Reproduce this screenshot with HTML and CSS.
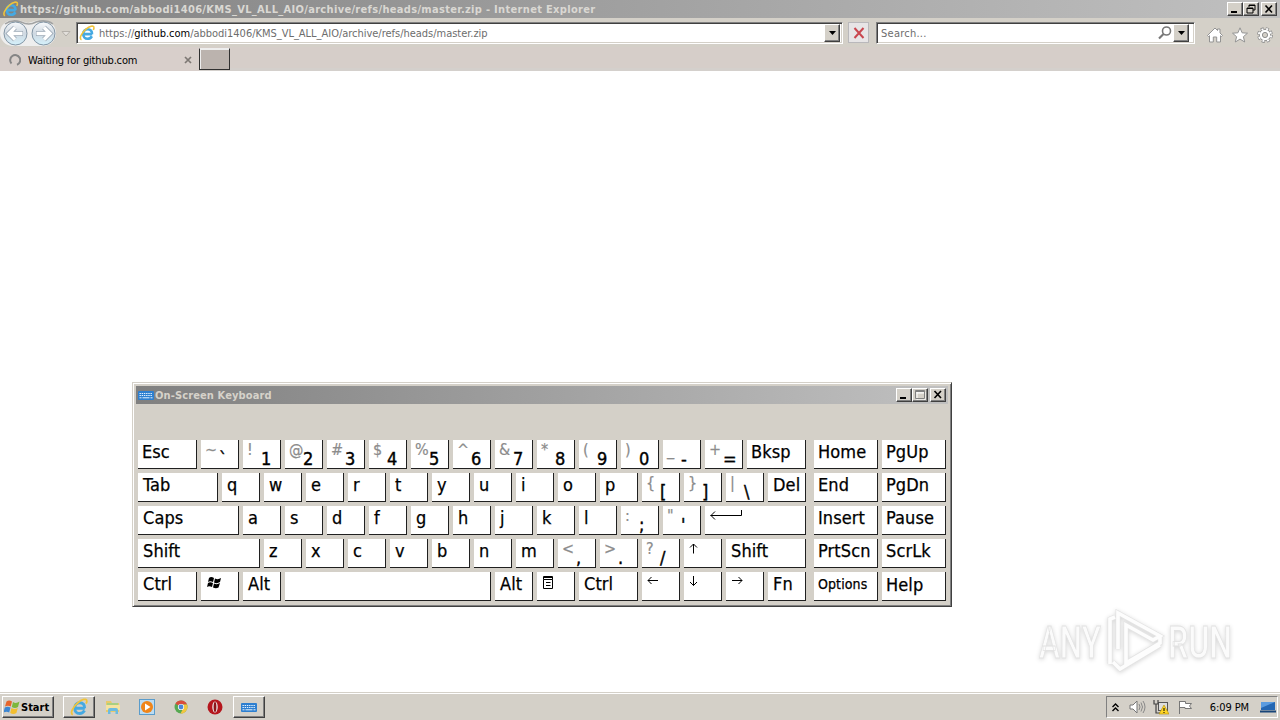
FILE: index.html
```html
<!DOCTYPE html>
<html lang="en">
<head>
    <meta charset="UTF-8">
    <title>Internet Explorer</title>
    <link rel="stylesheet" href="styles.css">
</head>
<body>
    <svg width="0" height="0" class="defs">
        <defs>
            <symbol id="ie" viewBox="0 0 16 16">
                <path d="M13.2 9.1H5.5M12.9 11.2C11.8 13 10.5 13.8 8.6 13.8C5.8 13.8 4.2 11.7 4.2 9C4.2 6.2 6 4.2 8.7 4.2C11.6 4.2 13.2 6.2 13 9.1" fill="none" stroke="#45a9e2" stroke-width="2.6"/>
                <path d="M2.5 14.8C-.5 13.5 3 7.5 7 4.2C10.5 1.2 14.5.2 14.9 2.2C15.1 3 14.8 4 14.3 5" fill="none" stroke="#f0c33a" stroke-width="1.6"/>
            </symbol>
            <symbol id="kbd" viewBox="0 0 16 9">
                <rect width="16" height="9" rx="1" fill="#2d7fd0"/>
                <path d="M1.5 2.5H14.5M1.5 4.5H14.5" stroke="#e4f2ff" stroke-dasharray="1.4 .8"/>
                <path d="M1.5 6.8H3.5M4.5 6.8H11.5M12.5 6.8H14.5" stroke="#e4f2ff"/>
            </symbol>
        </defs>
    </svg>

    <div class="titlebar">
        <svg class="title-ie" width="17" height="16"><use href="#ie"/></svg>
        <span class="title-text">https://github.com/abbodi1406/KMS_VL_ALL_AIO/archive/refs/heads/master.zip - Internet Explorer</span>
        <div class="win-buttons">
            <span class="wbtn"><svg width="12" height="10"><path d="M2 8H8" stroke="#000" stroke-width="2"/></svg></span>
            <span class="wbtn"><svg width="12" height="10"><path d="M4 1H10V6H8M4 1V3M4 1.5H10M2 4H8V9H2ZM2 4.5H8" fill="none" stroke="#000"/></svg></span>
            <span class="wbtn close"><svg width="12" height="10"><path d="M2.5 1.5L9 8.5M9 1.5L2.5 8.5" stroke="#000" stroke-width="1.6"/></svg></span>
        </div>
    </div>

    <div class="navbar">
        <svg class="nav-arrows" width="74" height="29">
            <defs>
                <linearGradient id="ball" x1="0" y1="0" x2="0" y2="1">
                    <stop offset="0" stop-color="#f8fafc"/><stop offset=".5" stop-color="#cfd8e1"/><stop offset="1" stop-color="#d5f1fb"/>
                </linearGradient>
            </defs>
            <path d="M13 2Q20 2 28 5Q36 2 43 2A13 13 0 0 1 43 28H13A13 13 0 0 1 13 2Z" fill="#eeeeee"/>
            <path d="M5 6Q12 1 21 4Q29 8 36 4Q46 1 53 6" fill="none" stroke="#a2a3a3" stroke-width="1.500"/>
            <circle cx="15.500" cy="15.500" r="11.500" fill="url(#ball)" stroke="#8295a5"/>
            <circle cx="43.500" cy="15.500" r="11.500" fill="url(#ball)" stroke="#8295a5"/>
            <path d="M23 15.500H10M15 9.500L9 15.500L15 21.500" fill="none" stroke="#9aa7b4" stroke-width="5"/>
            <path d="M22.500 15.500H10M15 9.500L9 15.500L15 21.500" fill="none" stroke="#fff" stroke-width="3.400"/>
            <path d="M36 15.500H49M44 9.500L50 15.500L44 21.500" fill="none" stroke="#9aa7b4" stroke-width="5"/>
            <path d="M36.500 15.500H49M44 9.500L50 15.500L44 21.500" fill="none" stroke="#fff" stroke-width="3.400"/>
            <path d="M62 13.500H70L66 18Z" fill="#e3e0dc" stroke="#b4b0aa"/>
        </svg>
        <div class="address">
            <svg width="16" height="16"><use href="#ie"/></svg>
            <span class="url">https://<b>github.com</b>/abbodi1406/KMS_VL_ALL_AIO/archive/refs/heads/master.zip</span>
            <span class="drop"><svg width="7" height="4"><path d="M0 0H7L3.500 4Z"/></svg></span>
        </div>
        <div class="stop"><svg width="12" height="12"><path d="M1.500 1L10.500 11M10.500 1L1.500 11" stroke="#c9474f" stroke-width="2"/></svg></div>
        <div class="search">
            <span>Search...</span>
            <svg class="glass" width="14" height="14"><circle cx="8.500" cy="5" r="4" fill="none" stroke="#777" stroke-width="1.600"/><path d="M5.500 8L1 12.500" stroke="#777" stroke-width="2.200"/></svg>
            <span class="drop"><svg width="7" height="4"><path d="M0 0H7L3.500 4Z"/></svg></span>
        </div>
        <div class="tools">
            <svg width="16" height="16"><path d="M8 1L10.500 3.500V2H13V6L15.500 8.500L14.500 9.500L13.500 8.700V15H9.700V10H6.300V15H2.500V8.700L1.500 9.500L.5 8.500Z" fill="#fff" stroke="#939393"/></svg>
            <svg width="16" height="16"><path d="M8 .8L10.100 5.800L15.500 6.200L11.400 9.700L12.700 15L8 12.100L3.300 15L4.600 9.700L.5 6.200L5.900 5.800Z" fill="#fff" stroke="#939393"/></svg>
            <svg width="16" height="16"><circle cx="8" cy="8" r="6.200" fill="none" stroke="#8e8e8e" stroke-width="3.400" stroke-dasharray="2.900 1.970"/><circle cx="8" cy="8" r="5.700" fill="#fff" stroke="#8e8e8e"/><circle cx="8" cy="8" r="6.200" fill="none" stroke="#fff" stroke-width="1.800" stroke-dasharray="1.900 2.970" stroke-dashoffset="-.5"/><circle cx="8" cy="8" r="2.600" fill="#d4d0c8" stroke="#8e8e8e"/></svg>
        </div>
    </div>

    <div class="tabs">
        <div class="tab">
            <svg width="12" height="12"><path d="M2.500 9.500A5 5 0 1 1 8 10.800" fill="none" stroke="#858585" stroke-width="2"/></svg>
            <span>Waiting for github.com</span>
            <svg class="tab-x" width="8" height="8"><path d="M1 1L7 7M7 1L1 7" stroke="#7d7874" stroke-width="1.700"/></svg>
        </div>
        <div class="new-tab"></div>
    </div>

    <div class="page">
        <svg class="watermark" width="220" height="74">
            <g class="mark-text">
                <text x="7" y="49" textLength="62" lengthAdjust="spacingAndGlyphs">ANY</text>
                <text x="136" y="49" textLength="64" lengthAdjust="spacingAndGlyphs">RUN</text>
            </g>
            <path class="mark-edge" d="M78 55V10L83 8M86 40V4L128 27L121 31L94 16V54L128 34V28M81 53L88 60L128 36"/>
            <path class="mark-line" d="M78 55V10L83 8M86 40V4L128 27L121 31L94 16V54L128 34V28M81 53L88 60L128 36"/>
        </svg>
    </div>

    <div class="osk">
        <div class="osk-title">
            <svg width="16" height="9"><use href="#kbd"/></svg>
            <span>On-Screen Keyboard</span>
            <div class="win-buttons">
                <span class="wbtn"><svg width="12" height="10"><path d="M2 8H8" stroke="#000" stroke-width="2"/></svg></span>
                <span class="wbtn"><svg width="12" height="10"><path d="M2 1.500H10.500V9.500H2.500V1M2 2.500H10" fill="none" stroke="#fff" transform="translate(.5 .5)"/><path d="M1.500 .5H10.500V8.500H1.500ZM2 1.500H10" fill="none" stroke="#808080"/></svg></span>
                <span class="wbtn close"><svg width="12" height="10"><path d="M2.500 1L9 8M9 1L2.500 8" stroke="#000" stroke-width="1.600"/></svg></span>
            </div>
        </div>
        <div class="keys">
            <div class="row">
                <div class="key w59">Esc</div>
                <div class="key"><i>~</i><b>`</b></div>
                <div class="key"><i>!</i><b>1</b></div>
                <div class="key"><i>@</i><b>2</b></div>
                <div class="key"><i>#</i><b>3</b></div>
                <div class="key"><i>$</i><b>4</b></div>
                <div class="key"><i>%</i><b>5</b></div>
                <div class="key"><i>^</i><b>6</b></div>
                <div class="key"><i>&amp;</i><b>7</b></div>
                <div class="key"><i>*</i><b>8</b></div>
                <div class="key"><i>(</i><b>9</b></div>
                <div class="key"><i>)</i><b>0</b></div>
                <div class="key"><i>_</i><b>-</b></div>
                <div class="key"><i>+</i><b>=</b></div>
                <div class="key w59">Bksp</div>
                <div class="key side first">Home</div>
                <div class="key side">PgUp</div>
            </div>
            <div class="row">
                <div class="key w80">Tab</div>
                <div class="key">q</div>
                <div class="key">w</div>
                <div class="key">e</div>
                <div class="key">r</div>
                <div class="key">t</div>
                <div class="key">y</div>
                <div class="key">u</div>
                <div class="key">i</div>
                <div class="key">o</div>
                <div class="key">p</div>
                <div class="key"><i>{</i><b>[</b></div>
                <div class="key"><i>}</i><b>]</b></div>
                <div class="key"><i>|</i><b>\</b></div>
                <div class="key">Del</div>
                <div class="key side first">End</div>
                <div class="key side">PgDn</div>
            </div>
            <div class="row">
                <div class="key w101">Caps</div>
                <div class="key">a</div>
                <div class="key">s</div>
                <div class="key">d</div>
                <div class="key">f</div>
                <div class="key">g</div>
                <div class="key">h</div>
                <div class="key">j</div>
                <div class="key">k</div>
                <div class="key">l</div>
                <div class="key"><i>:</i><b>;</b></div>
                <div class="key"><i>"</i><b>'</b></div>
                <div class="key w101"><svg width="40" height="18"><path d="M1.500 9.500H32.500V4M6 5.500L2 9.500L6 13.500" fill="none" stroke="#000"/></svg></div>
                <div class="key side first">Insert</div>
                <div class="key side">Pause</div>
            </div>
            <div class="row">
                <div class="key w122">Shift</div>
                <div class="key">z</div>
                <div class="key">x</div>
                <div class="key">c</div>
                <div class="key">v</div>
                <div class="key">b</div>
                <div class="key">n</div>
                <div class="key">m</div>
                <div class="key"><i>&lt;</i><b>,</b></div>
                <div class="key"><i>&gt;</i><b>.</b></div>
                <div class="key"><i>?</i><b>/</b></div>
                <div class="key"><svg width="16" height="18"><path d="M5.500 14.500V5M2 8.500L5.500 5L9 8.500" fill="none" stroke="#000"/></svg></div>
                <div class="key w80">Shift</div>
                <div class="key side first">PrtScn</div>
                <div class="key side">ScrLk</div>
            </div>
            <div class="row">
                <div class="key w59">Ctrl</div>
                <div class="key"><svg width="18" height="18"><path d="M4 6Q6 4 9 6L8 10Q5 8.500 3 10ZM10 6.500Q13 8 16 6L15 10Q12 12 9 10.500ZM3 11Q5 9.500 8 11L7 15Q4 13.500 2 15ZM9 11.500Q12 13 15 11L13.500 15.500Q11 17 8 15.500Z"/></svg></div>
                <div class="key">Alt</div>
                <div class="key w206"></div>
                <div class="key">Alt</div>
                <div class="key"><svg width="16" height="18"><path d="M2.500 4.500H11.500V7.500H2.500ZM2.500 7.500V16.500H11.500V7.500M2.500 5.500H11.500M5 10.500H9.500M5 13.500H9.500" fill="none" stroke="#000"/></svg></div>
                <div class="key w59">Ctrl</div>
                <div class="key"><svg width="16" height="18"><path d="M12 8.500H2M5.500 5L2 8.500L5.500 12" fill="none" stroke="#000"/></svg></div>
                <div class="key"><svg width="16" height="18"><path d="M5.500 4V13.500M2 10L5.500 13.500L9 10" fill="none" stroke="#000"/></svg></div>
                <div class="key"><svg width="16" height="18"><path d="M2 8.500H12M8.500 5L12 8.500L8.500 12" fill="none" stroke="#000"/></svg></div>
                <div class="key">Fn</div>
                <div class="key side first options">Options</div>
                <div class="key side help">Help</div>
            </div>
        </div>
    </div>

    <div class="taskbar">
        <div class="start">
            <svg width="16" height="16"><path d="M2.500 2.500Q5 .5 8 2.500L6.700 7.500Q4 6 1 7.500Z" fill="#e6652c"/><path d="M9 3Q12 5 15.500 2.500L14 8Q11 10 7.800 8Z" fill="#7db73c"/><path d="M.8 8.500Q3.500 7 6.500 8.500L5.200 13.500Q2.500 12-.5 13.500Z" fill="#3c86d2"/><path d="M7.500 9Q10.500 11 13.800 9L12.400 14Q9.500 16 6.200 14Z" fill="#f3be2f"/></svg>
            <span>Start</span>
        </div>
        <div class="task active"><svg width="18" height="18"><use href="#ie"/></svg></div>
        <div class="task"><svg width="16" height="16"><path d="M1 2H6L7 4H14V13H1Z" fill="#e9ca69"/><path d="M2 4H13V7H2Z" fill="#a9cf82"/><path d="M1 6H15V11H1Z" fill="#f5e3a0"/><path d="M3 15V11Q3 9 5 9H11Q13 9 13 11V15H10.500V12H5.500V15Z" fill="#6dbbe0"/></svg></div>
        <div class="task"><svg width="16" height="16"><rect x=".5" y=".5" width="15" height="15" fill="#bcdcf2" stroke="#5a9ccb"/><circle cx="8" cy="8" r="6" fill="#f08519"/><path d="M6 4.500L11.500 8L6 11.500Z" fill="#fff"/></svg></div>
        <div class="task"><svg width="16" height="16"><circle cx="8" cy="8" r="6.500" fill="#56a851"/><path d="M8 8L2.400 4.700A6.500 6.500 0 0 1 14 5.500H8Z" fill="#d94c3c"/><path d="M14 5.500A6.500 6.500 0 0 1 7.500 14.500L11 8L9 5.500Z" fill="#f2c640"/><circle cx="8" cy="8" r="3.100" fill="#fff"/><circle cx="8" cy="8" r="2.400" fill="#4a86d8"/></svg></div>
        <div class="task"><svg width="16" height="16"><circle cx="8" cy="8" r="7.500" fill="#b5161d"/><ellipse cx="8" cy="8" rx="2.700" ry="5.500" fill="#eee"/><ellipse cx="8" cy="8" rx="1.400" ry="5" fill="#8d1519"/></svg></div>
        <div class="task active"><svg width="16" height="9"><use href="#kbd"/></svg></div>
        <div class="tray">
            <svg width="7" height="9"><path d="M.5 4L3.500 1L6.500 4M.5 8L3.500 5L6.500 8" fill="none" stroke="#000" stroke-width="1.400"/></svg>
            <svg class="speaker" width="17" height="14"><path d="M1 5H4L8 1V13L4 9H1Z" fill="#fff" stroke="#777"/><path d="M10 4Q12 7 10 10M12 2.500Q15 7 12 11.500M14 1Q18 7 14 13" fill="none" stroke="#888"/></svg>
            <svg class="net" width="16" height="16"><rect x="5.500" y="3.500" width="9" height="8" fill="#ddd" stroke="#555"/><path d="M1 1V5H5V1M3 5V14H9" fill="none" stroke="#444" stroke-width="1.200"/><path d="M11 6L16 15H6Z" fill="#ffd525" stroke="#b08b00" stroke-width=".6"/><path d="M11 9V12M11 13V14" stroke="#000"/></svg>
            <svg class="flag" width="16" height="15"><path d="M2.500 14V1M2.500 1.500H8.500V3.500H14.500L12.500 6L14.500 8.500H8V7.500H2.500" fill="#fff" stroke="#777"/></svg>
            <span class="clock">6:09 PM</span>
            <svg width="16" height="12"><path d="M1 1H15V9H1Z" fill="#2467b3"/><path d="M1 1H15L1 7Z" fill="#5b9ce0"/><path d="M0 10.500H16" stroke="#194578" stroke-width="2"/></svg>
        </div>
    </div>
</body>
</html>
```
FILE: styles.css
```css
* {
    box-sizing: border-box;
}
body {
    margin: 0;
    width: 1280px;
    height: 720px;
    overflow: hidden;
    display: flex;
    flex-direction: column;
    background: #fff;
    font-family: "DejaVu Sans Condensed", "DejaVu Sans", sans-serif;
    font-stretch: condensed;
    font-size: 11px;
    color: #000;
}
svg {
    display: block;
    flex: none;
}
.defs {
    position: absolute;
}

/* browser title bar */
.titlebar {
    height: 18px;
    flex: none;
    display: flex;
    align-items: center;
    padding: 0 3px 0 2px;
    background: linear-gradient(90deg, #828282, #c0c0c0);
    color: #dad8d3;
    font-weight: bold;
}
.title-text {
    margin-left: 1px;
    white-space: nowrap;
    letter-spacing: .32px;
}
.win-buttons {
    margin-left: auto;
    display: flex;
}
.wbtn {
    width: 16px;
    height: 14px;
    background: #d4d0c8;
    border: 1px solid;
    border-color: #fff #404040 #404040 #fff;
    box-shadow: inset -1px -1px #808080;
    padding: 1px;
}
.wbtn.close {
    margin-left: 2px;
}

/* address row */
.navbar {
    height: 29px;
    flex: none;
    display: flex;
    background: #d4d0c8;
}
.nav-arrows {
    margin-right: 2px;
}
.address, .search {
    height: 22px;
    margin-top: 4px;
    display: flex;
    align-items: center;
    background: #fff;
    border: 1px solid;
    border-color: #808080 #fff #fff #808080;
    box-shadow: inset 1px 1px #404040, inset -1px -1px #d4d0c8;
    color: #6d6d6d;
}
.address {
    width: 767px;
    padding: 0 2px 0 2px;
}
.url {
    margin-left: 4px;
    padding-top: 1px;
    letter-spacing: -.02px;
}
.url b {
    font-weight: normal;
    color: #000;
}
.drop {
    width: 16px;
    height: 18px;
    margin-left: auto;
    display: flex;
    align-items: center;
    justify-content: center;
    background: #d4d0c8;
    border: 1px solid;
    border-color: #fff #404040 #404040 #fff;
    box-shadow: inset -1px -1px #808080;
}
.stop {
    width: 21px;
    height: 21px;
    margin: 4px 7px 0 5px;
    display: flex;
    align-items: center;
    justify-content: center;
    background: #e7e5e6;
    border: 1px solid #b9b8bb;
}
.search {
    width: 319px;
    padding: 0 5px 0 4px;
}
.search > span:first-child {
    padding-top: 1px;
    letter-spacing: .25px;
}
.search .glass {
    margin-left: auto;
}
.search .drop {
    margin-left: 1px;
}
.tools {
    display: flex;
    gap: 9px;
    padding: 9px 0 0 12px;
}

/* tab row */
.tabs {
    height: 24px;
    flex: none;
    display: flex;
    background: #d6cec9;
    border-bottom: 3px solid #d4d0cc;
}
.tab {
    width: 199px;
    height: 24px;
    display: flex;
    align-items: center;
    padding: 2px 7px 0 9px;
    background: #d8cfcb;
}
.tab span {
    margin-left: 7px;
    letter-spacing: -.17px;
}
.tab-x {
    margin-left: auto;
}
.new-tab {
    width: 31px;
    height: 22px;
    margin-top: 1px;
    background: #bbb3ae;
    border: 1px solid;
    border-color: #eee #303030 #303030 #303030;
    box-shadow: inset 1px 1px #eee;
}

/* page area */
.page {
    flex: 1;
    position: relative;
}
.watermark {
    position: absolute;
    left: 1032px;
    top: 538px;
    filter: drop-shadow(0 1px 2px rgba(0, 0, 0, 0.16));
}
.mark-text {
    font: 500 45px Roboto, sans-serif;
    fill: #fbfbfb;
    stroke: #e2e2e2;
    stroke-width: .8px;
}
.mark-edge {
    fill: none;
    stroke: #e4e4e4;
    stroke-width: 5px;
}
.mark-line {
    fill: none;
    stroke: #fdfdfd;
    stroke-width: 3.6px;
}

/* on-screen keyboard */
.osk {
    position: absolute;
    left: 132px;
    top: 382px;
    width: 820px;
    height: 225px;
    padding: 3px;
    background: #d4d0c8;
    border: 1px solid;
    border-color: #d4d0c8 #404040 #404040 #d4d0c8;
    box-shadow: inset 1px 1px #fff, inset -1px -1px #808080;
}
.osk-title {
    height: 18px;
    display: flex;
    align-items: center;
    padding: 0 2px;
    background: linear-gradient(90deg, #808080, #c0c0c0);
    color: #d6d2ca;
    font-weight: bold;
}
.osk-title span {
    margin-left: 1px;
    letter-spacing: .12px;
}
.osk-title .wbtn {
    margin-left: 0;
}
.osk-title .wbtn.close {
    margin-left: 2px;
}
.keys {
    display: flex;
    flex-direction: column;
    gap: 4px;
    padding: 36px 2px 0;
}
.row {
    display: flex;
    gap: 4px;
}
.key {
    width: 38px;
    height: 29px;
    flex: none;
    display: flex;
    overflow: hidden;
    padding-left: 4px;
    background: #fff;
    border-right: 1px solid #202020;
    border-bottom: 1px solid #202020;
    font-size: 18px;
    line-height: 24px;
    letter-spacing: .1px;
    white-space: nowrap;
    -webkit-text-stroke: .25px #000;
}
.row:not(:first-child) .key {
    padding-left: 5px;
}
.row .key.side,
.row:not(:first-child) .key.side {
    padding-left: 4px;
}
.key i {
    width: 14px;
    flex: none;
    font-style: normal;
    font-size: 16px;
    line-height: 19px;
    color: #8c8c8c;
    -webkit-text-stroke: .2px #8c8c8c;
}
.row:not(:first-child) .key i {
    margin-left: -1px;
}
.row .key svg {
    margin-left: -1px;
}
.key b {
    font-weight: normal;
    line-height: 37px;
    -webkit-text-stroke: .4px #000;
}
.w59 { width: 59px; }
.w80 { width: 80px; }
.w101 { width: 101px; }
.w122 { width: 122px; }
.w206 { width: 206px; }
.side { width: 64px; }
.side.first { margin-left: 4px; }
.row .key.options {
    font-size: 14px;
    padding-left: 5px;
}
.help {
    line-height: 25px;
}

/* taskbar */
.taskbar {
    height: 28px;
    flex: none;
    display: flex;
    align-items: flex-start;
    padding: 3px 2px 0;
    background: #d4d0c8;
    border-top: 1px solid #d4d0c8;
    box-shadow: inset 0 1px #fff;
}
.start, .task.active {
    height: 22px;
    background: #d4d0c8;
    border: 1px solid;
    border-color: #fff #404040 #404040 #fff;
    box-shadow: inset -1px -1px #808080;
}
.start {
    width: 52px;
    display: flex;
    align-items: center;
    padding-left: 1px;
    margin-right: 9px;
    font-weight: bold;
}
.start svg {
    margin-right: 1px;
}
.task {
    width: 32px;
    height: 22px;
    margin-right: 2px;
    display: flex;
    align-items: center;
    justify-content: center;
}
.tray {
    width: 172px;
    height: 22px;
    margin-left: auto;
    display: flex;
    align-items: center;
    padding: 0 1px 0 5px;
    border: 1px solid;
    border-color: #808080 #fff #fff #808080;
}
.speaker { margin-left: 10px; }
.net { margin-left: 7px; }
.flag { margin-left: 8px; }
.clock {
    margin: 0 11px 0 auto;
    letter-spacing: -.1px;
}
```
